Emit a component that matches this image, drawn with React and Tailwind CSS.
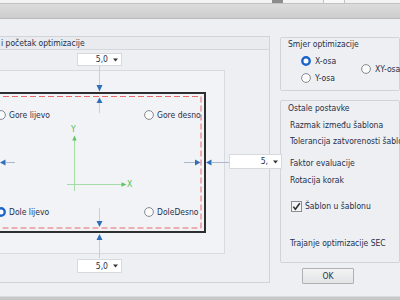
import React from 'react';

const txt = 'text-[#25304a]';

function RadioDot({ checked }) {
  return (
    <svg width="10" height="10" viewBox="0 0 10 10" className="shrink-0">
      {checked ? (
        <circle cx="5" cy="5" r="3.7" fill="#fff" stroke="#1b64c8" strokeWidth="2.4" />
      ) : (
        <circle cx="5" cy="5" r="4.4" fill="#fbfbfb" stroke="#858a90" strokeWidth="1" />
      )}
    </svg>
  );
}

function Radio({ label, checked, className = '' }) {
  return (
    <div className={`flex items-center gap-[3px] h-[12px] ${className}`}>
      <RadioDot checked={checked} />
      <span className="leading-none whitespace-nowrap">{label}</span>
    </div>
  );
}

function Combo({ value, className = '' }) {
  return (
    <div
      className={`absolute flex items-center justify-end gap-[5px] pr-[3px] bg-white border border-[#d6d9dd] ${className}`}
    >
      <span className="leading-none">{value}</span>
      <svg width="5" height="4" viewBox="0 0 5 4">
        <path d="M0 0.5 H5 L2.5 3.5 Z" fill="#333" />
      </svg>
    </div>
  );
}

function Diagram() {
  const blue = '#2f6fba';
  const stem = '#c9ced5';
  const green = '#5cc462';
  const lgreen = '#a6dca8';
  return (
    <svg
      className="absolute left-0 top-0"
      width="286"
      height="231"
      viewBox="0 51 286 231"
    >
      {/* outer frame and tolerance line */}
      <rect x="-6" y="94" width="211" height="139" fill="none" stroke="#2e2e2e" strokeWidth="2" />
      <rect x="-6" y="97.5" width="207" height="131.5" fill="none" stroke="#e66a6c" strokeWidth="1" strokeDasharray="6 3" />

      {/* top */}
      <line x1="99.5" y1="67" x2="99.5" y2="86" stroke={stem} />
      <path d="M96.5 86 H102.5 L99.5 92.5 Z" fill={blue} />
      <path d="M96.5 104 H102.5 L99.5 98.5 Z" fill={blue} />
      <line x1="99.5" y1="104" x2="99.5" y2="114" stroke={stem} />

      {/* bottom */}
      <line x1="99.5" y1="209" x2="99.5" y2="222" stroke={stem} />
      <path d="M96.5 222 H102.5 L99.5 228 Z" fill={blue} />
      <path d="M96.5 241 H102.5 L99.5 235 Z" fill={blue} />
      <line x1="99.5" y1="241" x2="99.5" y2="259" stroke={stem} />

      {/* left */}
      <path d="M5.5 160.5 V166.5 L0 163.5 Z" fill={blue} />
      <line x1="5.5" y1="163.5" x2="15" y2="163.5" stroke="#a9b8cc" />

      {/* right */}
      <line x1="184" y1="163.5" x2="195" y2="163.5" stroke="#a9b8cc" />
      <path d="M195 160.5 V166.5 L200.5 163.5 Z" fill={blue} />
      <path d="M211.5 160.5 V166.5 L206 163.5 Z" fill={blue} />
      <line x1="211.5" y1="163.5" x2="229" y2="163.5" stroke="#a9b8cc" />

      {/* axes */}
      <line x1="74.5" y1="140" x2="74.5" y2="192" stroke={lgreen} />
      <path d="M72.3 141.5 H76.7 L74.5 136.5 Z" fill={green} />
      <line x1="67" y1="185.5" x2="122" y2="185.5" stroke={lgreen} />
      <path d="M121.5 183.3 V187.7 L126.5 185.5 Z" fill={green} />
    </svg>
  );
}

export default function App() {
  return (
    <div
      className={`w-[400px] h-[300px] overflow-hidden flex flex-col bg-[#edeff2] font-['Liberation_Sans_Narrow','DejaVu_Sans_Condensed','Liberation_Sans',sans-serif] text-[8.5px] ${txt}`}
    >
      {/* strip of window above */}
      <div className="h-[3px] bg-[#f3f3f3] flex">
        <div className="ml-[272px] w-[11px] bg-[#8c8c8c]" />
        <div className="ml-[40px] w-[22px] border-x border-[#c4c4c4] bg-[#f8f8f8]" />
      </div>
      {/* title bar */}
      <div className="h-[16px] bg-gradient-to-b from-[#dcdcdc] to-[#cdcdcd] border-t border-[#c2c2c2] border-b border-b-[#b9b9b9]" />

      <div className="flex-1 flex pt-[17px]">
        {/* left group */}
        <div className="w-[287px] h-[247px] flex flex-col border-t border-r border-b border-[#d0d3d7]">
          <div className="h-[13px] flex items-center pl-[1px] bg-[#e9ebee] border-b border-[#d3d6da]">
            <span className="leading-none">i početak optimizacije</span>
          </div>
          <div className="relative flex-1">
            <div className="absolute left-[-1px] top-[20px] w-[226px] h-[184px] bg-[#f2f3f6] border border-[#d7dade]" />
            <Diagram />

            <Combo value="5,0" className="left-[77px] top-[3px] w-[45px] h-[13px]" />
            <Combo value="5,0" className="left-[77px] top-[209px] w-[45px] h-[14px]" />
            <Combo value="5," className="left-[229px] top-[104px] w-[53px] h-[15px]" />

            <Radio label="Gore lijevo" className="absolute left-[-4px] top-[59px]" />
            <Radio label="Gore desno" className="absolute left-[144px] top-[59px]" />
            <Radio label="Dole lijevo" checked className="absolute left-[-4px] top-[156px]" />
            <Radio label="DoleDesno" className="absolute left-[144px] top-[156px]" />

            <span className="absolute left-[71px] top-[75px] leading-none text-[8.5px] text-[#4cbf55]">Y</span>
            <span className="absolute left-[127px] top-[130px] leading-none text-[8.5px] text-[#4cbf55]">X</span>
          </div>
        </div>

        {/* right column */}
        <div className="ml-[10px] flex flex-col">
          <div className="mt-[1px] w-[120px] h-[54px] border border-[#d0d3d7] rounded-[2px] flex flex-col">
            <div className="h-[13px] flex items-center pl-[7px]">
              <span className="leading-none">Smjer optimizacije</span>
            </div>
            <div className="flex mt-[4px]">
              <div className="flex flex-col gap-[5px] pl-[20px]">
                <Radio label="X-osa" checked className="gap-[4px]" />
                <Radio label="Y-osa" className="gap-[4px]" />
              </div>
              <Radio label="XY-osa" className="ml-[25px] mt-[8px] gap-[4px]" />
            </div>
          </div>

          <div className="mt-[9px] w-[120px] h-[163px] border border-[#d0d3d7] rounded-[2px] flex flex-col pl-[9px]">
            <div className="h-[14px] flex items-center -ml-[2px]">
              <span className="leading-none">Ostale postavke</span>
            </div>
            <div className="mt-[3px] h-[14px] flex items-center whitespace-nowrap">Razmak između šablona</div>
            <div className="mt-[2px] h-[14px] flex items-center whitespace-nowrap">Tolerancija zatvorenosti šablona</div>
            <div className="mt-[8px] h-[14px] flex items-center whitespace-nowrap">Faktor evaluacije</div>
            <div className="mt-[3px] h-[14px] flex items-center whitespace-nowrap">Rotacija korak</div>
            <div className="mt-[12px] h-[14px] flex items-center gap-[3px] whitespace-nowrap">
              <svg width="11" height="11" viewBox="0 0 11 11" className="ml-[1px]">
                <rect x="0.5" y="0.5" width="10" height="10" fill="#f4f4f4" stroke="#8a8e94" />
                <path d="M2.3 5.6 L4.4 8.2 L8.8 2.2" fill="none" stroke="#2b2b2b" strokeWidth="1.5" />
              </svg>
              <span>Šablon u šablonu</span>
            </div>
            <div className="mt-[23px] h-[14px] flex items-center whitespace-nowrap">Trajanje optimizacije SEC</div>
          </div>

          <button
            type="button"
            className="mt-[5px] ml-[22px] w-[52px] h-[16px] flex items-center justify-center border border-[#adb0b4] rounded-[1px] bg-gradient-to-b from-[#f3f3f3] to-[#e3e4e6] text-[8.5px] leading-none text-[#25304a]"
          >
            OK
          </button>
        </div>
      </div>

      <div className="h-[4px] bg-[#c6c7c9] border-t border-[#d9dadc]" />
    </div>
  );
}
